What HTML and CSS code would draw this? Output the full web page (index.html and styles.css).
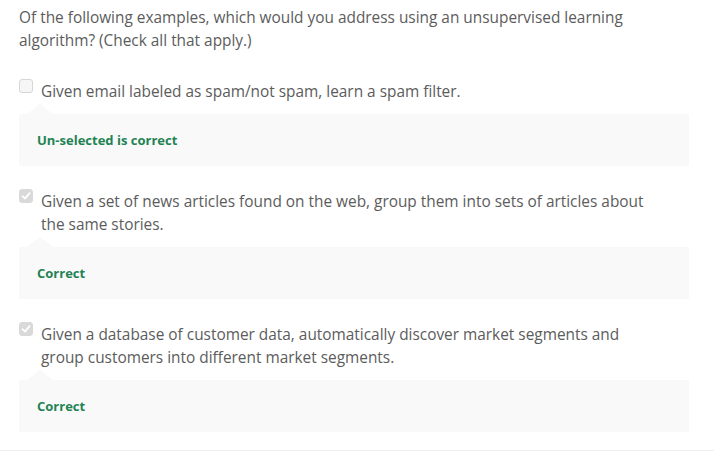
FILE: index.html
```html
<!DOCTYPE html>
<html>
<head>
<meta charset="utf-8">
<link rel="stylesheet" href="styles.css">
</head>
<body>
<div class="quiz">
  <p class="prompt">Of the following examples, which would you address using an unsupervised learning algorithm? (Check all that apply.)</p>

  <div class="option first">
    <label class="choice"><span class="box"></span><span class="text">Given email labeled as spam/not spam, learn a spam filter.</span></label>
    <div class="feedback">Un-selected is correct</div>
  </div>

  <div class="option">
    <label class="choice"><span class="box checked"><svg viewBox="0 0 14 14" width="14" height="14"><path d="M3.5 7.2 L6 9.6 L10.6 4.2" fill="none" stroke="#fff" stroke-width="1.8" stroke-linecap="round" stroke-linejoin="round"/></svg></span><span class="text">Given a set of news articles found on the web, group them into sets of articles about the same stories.</span></label>
    <div class="feedback">Correct</div>
  </div>

  <div class="option">
    <label class="choice"><span class="box checked"><svg viewBox="0 0 14 14" width="14" height="14"><path d="M3.5 7.2 L6 9.6 L10.6 4.2" fill="none" stroke="#fff" stroke-width="1.8" stroke-linecap="round" stroke-linejoin="round"/></svg></span><span class="text">Given a database of customer data, automatically discover market segments and group customers into different market segments.</span></label>
    <div class="feedback">Correct</div>
  </div>
</div>
</body>
</html>
```
FILE: styles.css
```css
html, body {
  margin: 0;
  padding: 0;
  background: #fff;
}
.quiz {
  font-family: "Open Sans", "Liberation Sans", sans-serif;
  font-size: 15.4px;
  line-height: 23px;
  color: #5c5c5c;
  padding: 6px 25px 18px 19px;
  border-bottom: 1px solid #eee;
}
.prompt {
  margin: 0;
}
.option {
  margin-top: 24px;
}
.option.first {
  margin-top: 28px;
}
.choice {
  display: flex;
  align-items: flex-start;
  gap: 8px;
}
.box {
  flex: none;
  width: 14px;
  height: 14px;
  box-sizing: border-box;
  margin-top: -1px;
  border: 1px solid #d6d6d6;
  border-radius: 3px;
  background: #f6f6f6;
  display: flex;
}
.box.checked {
  background: #d9d9d9;
  border-color: #d9d9d9;
}
.box svg {
  margin: -1px;
}
.text {
  max-width: 612px;
}
.feedback {
  position: relative;
  margin-top: 11px;
  height: 52px;
  box-sizing: border-box;
  padding-left: 18px;
  display: flex;
  align-items: center;
  background: #f9f9f9;
  color: #1f8354;
  font-weight: 700;
  font-size: 13px;
}
.feedback::before {
  content: "";
  position: absolute;
  left: 8px;
  top: -10px;
  border-left: 13px solid transparent;
  border-right: 13px solid transparent;
  border-bottom: 10px solid #f9f9f9;
}
```
